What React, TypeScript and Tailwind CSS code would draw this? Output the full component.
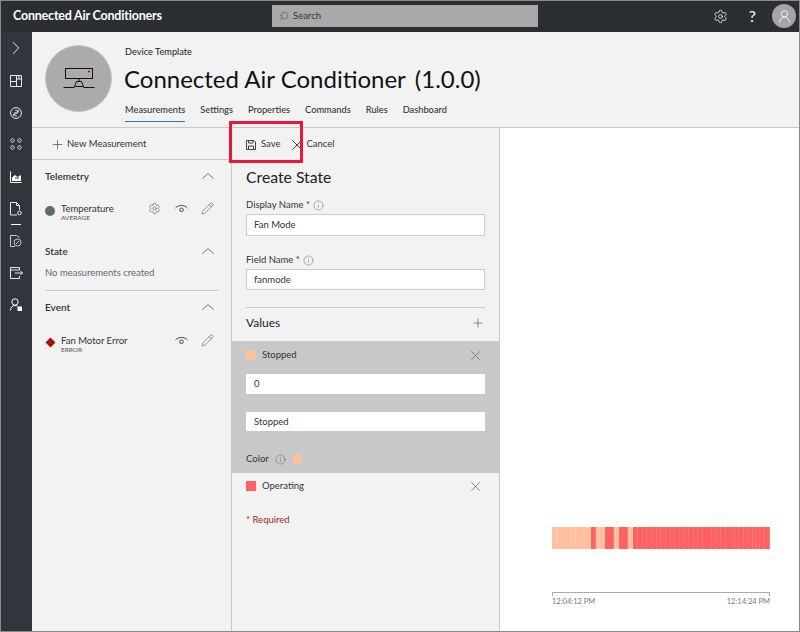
import { ChevronRight, Info, Pencil, Plus, Search, Settings, UserRound } from 'lucide-react';
import type { ReactNode } from 'react';

const tabs = ['Measurements', 'Settings', 'Properties', 'Commands', 'Rules', 'Dashboard'];

// segmentos del grafico: [ancho en px, estado]
const segments: [number, 'a' | 'b'][] = [
  [5, 'a'], [5, 'a'], [9, 'a'], [5, 'a'], [15, 'a'], [5, 'b'], [4, 'a'], [5, 'a'], [9, 'b'], [5, 'a'], [9, 'b'], [5, 'a'],
  [5, 'b'], [5, 'b'], [4, 'b'], [5, 'b'], [5, 'b'], [4, 'b'], [5, 'b'], [5, 'b'], [4, 'b'], [5, 'b'], [5, 'b'], [4, 'b'], [5, 'b'], [4, 'b'], [5, 'b'], [9, 'b'], [5, 'b'], [4, 'b'], [5, 'b'], [9, 'b'], [4, 'b'], [5, 'b'], [4, 'b'], [5, 'b'], [3, 'b'], [4, 'b'], [5, 'b'], [5, 'b'],
];

function Rail() {
  return (
    <aside className="w-8 shrink-0 bg-[#30363b] flex flex-col items-center pt-[5px]">
      <ChevronRight size={22} strokeWidth={1} className="text-white" />
      <svg className="mt-[16px]" width="12" height="12" viewBox="0 0 12 12" fill="none" stroke="#e8e8e8" strokeWidth="1"><path d="M.5.5h11v11H.5zM6.500.5v11M.5 6.500h6M6.500 4h5M9 1v3" /></svg>
      <svg className="mt-[20px]" width="12" height="12" viewBox="0 0 12 12" fill="none" stroke="#e8e8e8" strokeWidth="1"><circle cx="6" cy="6" r="5.400" /><path d="M3.500 9C2.500 6 8 7.500 8 5S5 3.500 5 3M8.500 3c1 3-4.500 1.500-4.500 4s3 1.500 3 2" /></svg>
      <svg className="mt-[19px]" width="12" height="12" viewBox="0 0 12 12" fill="none" stroke="#d8d8d8" strokeWidth="1"><circle cx="2.500" cy="2.500" r="1.700" /><circle cx="9.500" cy="2.500" r="1.700" /><circle cx="2.500" cy="9.500" r="1.700" /><circle cx="9.500" cy="9.500" r="1.700" /></svg>
      <svg className="mt-[21px]" width="12" height="12" viewBox="0 0 12 12" fill="none" stroke="white" strokeWidth="1"><path d="M.5.500v11h11" /><path d="M2 10V6.500l3-2.500 2.500 2L11 4v6z" fill="white" stroke="none" /><path d="M5 7h4" stroke="#30363b" /></svg>
      <svg className="mt-[19px]" width="12" height="14" viewBox="0 0 12 14" fill="none" stroke="#e8e8e8" strokeWidth="1"><path d="M7 13H.5V.500h6l3 3V8M6.500.500v3h3" /><circle cx="9.500" cy="11" r="1.800" /></svg>
      <div className="mt-[8px] w-[10px] h-px bg-white" />
      <svg className="mt-[10px]" width="12" height="12" viewBox="0 0 12 12" fill="none" stroke="#c8c9ca" strokeWidth="1"><path d="M5 11.500H.5V.500h6l3 2" /><circle cx="7.500" cy="7.500" r="3.500" /><path d="M6 9l3-3" /></svg>
      <svg className="mt-[20px]" width="13" height="12" viewBox="0 0 13 12" fill="none" stroke="#e8e8e8" strokeWidth="1"><path d="M9.500 3V.500h-9v11h9V9M.5 3h9M5 6h7.500M10.500 4l2 2-2 2" /></svg>
      <svg className="mt-[19px]" width="12" height="13" viewBox="0 0 12 13" fill="none" stroke="white" strokeWidth="1"><circle cx="5" cy="4" r="3.200" /><path d="M.5 12.500c0-3 2-5 4.500-5 1 0 2 .3 2.500 1" /><rect x="8" y="9" width="3.500" height="3.500" fill="white" /></svg>
    </aside>
  );
}

function Chevron() {
  return (
    <svg width="12" height="6" viewBox="0 0 12 6" fill="none" stroke="#5f7f8c" strokeWidth="1"><path d="M.5 5.500 6 .7l5.500 4.800" /></svg>
  );
}

function EyeIcon() {
  return (
    <svg width="13" height="9" viewBox="0 0 13 9" fill="none" stroke="#444" strokeWidth="1"><path d="M.5 4C3.500.6 9.500.6 12.500 4" /><circle cx="6.500" cy="5.800" r="1.800" /></svg>
  );
}

function CloseIcon({ size = 9, color = '#7a7a7a' }: { size?: number; color?: string }) {
  return (
    <svg width={size} height={size} viewBox="0 0 9 9" fill="none" stroke={color} strokeWidth="0.9"><path d="M.3.300l8.400 8.400M8.700.300.3 8.700" /></svg>
  );
}

function FloppyIcon() {
  return (
    <svg width="10" height="10" viewBox="0 0 10 10" fill="none" stroke="#444" strokeWidth="1"><path d="M.5.500h7.500l1.500 1.500v7.500h-9z" /><path d="M2.500.500v2.500h4.500V.500M2.500 9.500V6h5v3.500" /></svg>
  );
}

function Section({ title, mt }: { title: string; mt: string }) {
  return (
    <div className={`flex items-center justify-between pr-[17px] ${mt}`}>
      <span className="text-[10px] font-semibold text-[#333] leading-[16px]">{title}</span>
      <Chevron />
    </div>
  );
}

function Measure({ name, sub, gear, mark }: { name: string; sub: string; gear?: boolean; mark: ReactNode }) {
  return (
    <div className="flex items-start pr-[17px]">
      <div className="w-[10px] pt-[3px] h-[16px] flex items-center justify-center">{mark}</div>
      <div className="ml-[6px] flex-1 pt-px">
        <div className="text-[9.500px] leading-[13px] text-[#333]">{name}</div>
        <div className="text-[6.500px] leading-[6px] text-[#555]">{sub}</div>
      </div>
      <div className="flex items-center text-[#444] pt-[1px]">
        {gear && <Settings size={13} strokeWidth={1} className="mr-[14px]" />}
        <EyeIcon />
        <Pencil size={13} strokeWidth={1} className="ml-[13px]" />
      </div>
    </div>
  );
}

export default function App() {
  return (
    <div className="w-[800px] h-[632px] flex flex-col overflow-hidden bg-[#f2f2f2] font-['Lato',sans-serif] relative">
      <header className="h-8 shrink-0 bg-[#2b2f33] flex items-center relative">
        <span className="ml-[13px] text-[12.500px] font-bold text-white tracking-[-0.2px]">Connected Air Conditioners</span>
        <div className="absolute left-[272px] top-[5px] w-[266px] h-[22px] bg-[#a9a9a9] flex items-center pl-[7px] gap-[4px]">
          <Search size={10} strokeWidth={1} className="text-[#333] -scale-x-100" />
          <span className="text-[9.500px] text-[#333]">Search</span>
        </div>
        <div className="ml-auto flex items-center">
          <Settings size={15} strokeWidth={1.200} className="text-white mr-[21px]" />
          <span className="text-[16px] text-white mr-[16px] leading-none">?</span>
          <div className="w-6 h-6 rounded-full bg-[#a5a5a5] flex items-center justify-center mr-[4px]">
            <UserRound size={15} strokeWidth={1.300} className="text-white" />
          </div>
        </div>
      </header>

      <div className="flex-1 flex min-h-0">
        <Rail />
        <main className="flex-1 flex flex-col min-w-0">
          <div className="h-[96px] shrink-0 flex border-b border-[#c8c8c8]">
            <div className="ml-[13px] mt-[13px] w-[67px] h-[67px] rounded-full bg-[#ababab] border border-[#c4c4c4] flex items-center justify-center">
              <svg width="32" height="24" viewBox="0 0 32 24" fill="none" stroke="#111" strokeWidth="1">
                <rect x="2.500" y="1.500" width="27" height="10" />
                <path d="M25 4.500h2" strokeWidth="1.500" stroke="#7a1c1c" />
                <path d="M16 11.500v3M13.500 14.500h5l2 5h-9zM.5 20.500h11M20.500 20.500h11" />
              </svg>
            </div>
            <div className="ml-[12px] flex flex-col">
              <div className="mt-[13px] ml-px text-[9.250px] leading-[14px] text-[#222]">Device Template</div>
              <div className="mt-[5px] text-[24px] leading-[30px] text-[#111] flex gap-[9px]"><span>Connected Air Conditioner</span><span>(1.0.0)</span></div>
              <nav className="mt-[9px] ml-px flex gap-[15px] text-[9.250px] font-medium text-[#333] leading-[14px]">
                {tabs.map((t, i) => (
                  <span key={t} className={i === 0 ? 'border-b border-[#2b6fd6] pb-[4px] h-[19px]' : ''}>{t}</span>
                ))}
              </nav>
            </div>
          </div>

          <div className="flex-1 flex min-h-0">
            <section className="w-[200px] shrink-0 border-r border-[#c8c8c8]">
              <div className="h-[32px] pt-px flex items-center pl-[18px] gap-[2px] border-b border-[#c8c8c8] text-[9.500px] text-[#333]">
                <Plus size={15} strokeWidth={1} className="text-[#334]" />
                <span>New Measurement</span>
              </div>
              <div className="pl-[13px] pt-[8px]">
                <Section title="Telemetry" mt="" />
                <div className="mt-[17px]"><Measure name="Temperature" sub="AVERAGE" gear mark={<span className="block w-[10px] h-[10px] rounded-full bg-[#5f6b6b]" />} /></div>
                <Section title="State" mt="mt-[22px]" />
                <div className="mt-[7px] text-[9.500px] text-[#667] leading-[14px]">No measurements created</div>
                <div className="mr-[13px] mt-[10px] h-px bg-[#c8c8c8]" />
                <Section title="Event" mt="mt-[8px]" />
                <div className="mt-[18px]"><Measure name="Fan Motor Error" sub="ERROR" mark={<span className="block w-[7px] h-[7px] rotate-45 bg-[#a80f14]" />} /></div>
              </div>
            </section>

            <section className="w-[267px] shrink-0 flex flex-col">
              <div className="h-[33px] flex items-center pl-[14px] text-[9.500px] text-[#333]">
                <FloppyIcon />
                <span className="ml-[5px]">Save</span>
                <span className="ml-[11px] flex"><CloseIcon size={10} color="#444" /></span>
                <span className="ml-[5px]">Cancel</span>
              </div>
              <div className="px-[14px]">
                <h2 className="text-[15.750px] leading-[20px] text-[#222] mt-[6px]">Create State</h2>
                <div className="mt-[11px] flex items-center gap-[3px] text-[9.500px] leading-[14px] text-[#333]">Display Name *<Info size={11} strokeWidth={1} className="text-[#555]" /></div>
                <div className="mt-[2px] h-[22px] pt-px bg-white border border-[#ccc] pl-[7px] flex items-center text-[9.500px] text-[#333]">Fan Mode</div>
                <div className="mt-[17px] flex items-center gap-[3px] text-[9.500px] leading-[14px] text-[#333]">Field Name *<Info size={11} strokeWidth={1} className="text-[#555]" /></div>
                <div className="mt-[2px] h-[21px] pt-[2px] bg-white border border-[#ccc] pl-[7px] flex items-center text-[9.500px] text-[#333]">fanmode</div>
                <div className="mt-[17px] h-px bg-[#c8c8c8]" />
                <div className="h-[33px] pb-[3px] flex items-center justify-between text-[12px] text-[#222]">
                  Values
                  <Plus size={14} strokeWidth={1} className="text-[#445]" />
                </div>
              </div>
              <div className="h-[132px] bg-[#c8c8c8] px-[14px] text-[9.500px] text-[#333]">
                <div className="h-[27px] pt-px flex items-center">
                  <span className="w-[10px] h-[10px] bg-[#ffc0a0]" />
                  <span className="ml-[6px] flex-1">Stopped</span>
                  <span className="mr-[5px] flex"><CloseIcon /></span>
                </div>
                <div className="mt-[6px] h-[20px] pt-px bg-white pl-[8px] flex items-center">0</div>
                <div className="mt-[18px] h-[19px] pt-[2px] bg-white pl-[8px] flex items-center">Stopped</div>
                <div className="mt-[21px] flex items-center">
                  Color
                  <Info size={11} strokeWidth={1} className="ml-[6px] text-[#555]" />
                  <span className="ml-[7px] w-[9px] h-[10px] rounded-full bg-[#ffc0a0]" />
                </div>
              </div>
              <div className="px-[14px] text-[9.500px] text-[#333]">
                <div className="h-[26px] flex items-center">
                  <span className="w-[10px] h-[10px] bg-[#ff6060]" />
                  <span className="ml-[6px] flex-1">Operating</span>
                  <span className="mr-[5px] flex"><CloseIcon /></span>
                </div>
                <div className="mt-[14px] text-[9.500px] text-[#a4262c]">* Required</div>
              </div>
            </section>

            <section className="flex-1 bg-white border-l border-[#c8c8c8] pl-[52px] pr-[30px] flex flex-col">
              <div className="mt-[399px] h-[22px] flex">
                {segments.map(([w, k], i) => (
                  <span key={i} className={`border-r border-white/15 ${k === 'a' ? 'bg-[#ffc0a0]' : 'bg-[#ff6060]'}`} style={{ width: w }} />
                ))}
              </div>
              <div className="mt-[43px] h-[4px] border border-b-0 border-[#aaa]" />
              <div className="flex justify-between text-[7.500px] text-[#777] leading-[10px] mt-[1px]">
                <span>12:04:12 PM</span>
                <span>12:14:24 PM</span>
              </div>
            </section>
          </div>
        </main>
      </div>

      {/* marco rojo */}
      <div className="absolute left-[229px] top-[121px] w-[74px] h-[42px] border-[3px] border-[#e8173c] pointer-events-none" />
      <div className="absolute inset-0 border border-[#8a8a8a] pointer-events-none" />
    </div>
  );
}
